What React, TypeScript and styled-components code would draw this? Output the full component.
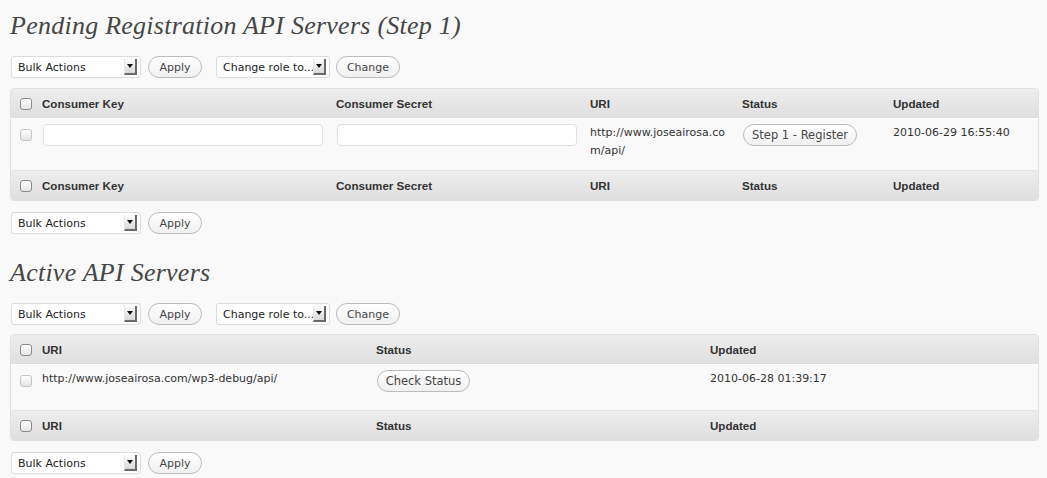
import React from "react";
import styled, { createGlobalStyle } from "styled-components";

const GlobalStyle = createGlobalStyle`
  html, body { margin: 0; padding: 0; background: #f9f9f9; }
  body { font-family: "DejaVu Sans", sans-serif; color: #333; }
  * { box-sizing: border-box; }
`;

const Page = styled.div`
  padding: 0 8px 0 10px;
  width: 1047px;
`;

const Title = styled.h2<{ $top: number }>`
  margin: ${(p) => p.$top}px 0 0;
  font-family: "Liberation Serif", serif;
  font-style: italic;
  font-weight: normal;
  font-size: 26px;
  letter-spacing: 0.25px;
  line-height: 30px;
  color: #464646;
`;

const Toolbar = styled.div<{ $top: number }>`
  display: flex;
  align-items: center;
  height: 22px;
  margin-top: ${(p) => p.$top}px;
`;

const SelectBox = styled.div<{ $w: number; $gap: number }>`
  position: relative;
  width: ${(p) => p.$w}px;
  height: 22px;
  margin-left: ${(p) => p.$gap}px;
  background: #fff;
  border: 1px solid #dcdcdc;
  border-radius: 3px;
  display: flex;
  align-items: center;
  padding-left: 6px;
  font-size: 11px;
  color: #222;
  white-space: nowrap;
  overflow: hidden;
`;

const Arrow = styled.span`
  position: absolute;
  right: 3px;
  top: 2px;
  width: 13px;
  height: 16px;
  background: linear-gradient(#fdfdfd, #d8d8d8);
  border-left: 1px solid #e6e6e6;
  border-right: 2px solid #6a6a6a;
  border-bottom: 2px solid #6a6a6a;
  display: flex;
  align-items: center;
  justify-content: center;
  &::after {
    content: "";
    border-left: 3px solid transparent;
    border-right: 3px solid transparent;
    border-top: 4px solid #111;
  }
`;

const Button = styled.button<{ $w: number; $gap: number }>`
  width: ${(p) => p.$w}px;
  height: 22px;
  margin-left: ${(p) => p.$gap}px;
  padding: 0;
  border: 1px solid #bbb;
  border-radius: 11px;
  background: linear-gradient(#ffffff, #f0f0f0);
  font-family: "DejaVu Sans", sans-serif;
  font-size: 11px;
  color: #464646;
  display: flex;
  align-items: center;
  justify-content: center;
  cursor: pointer;
`;

const Table = styled.div<{ $cols: string; $top: number }>`
  margin-top: ${(p) => p.$top}px;
  border: 1px solid #dfdfdf;
  border-radius: 4px;
  overflow: hidden;
  display: grid;
  grid-template-columns: ${(p) => p.$cols};
`;

const HeadCell = styled.div<{ $foot?: boolean }>`
  height: ${(p) => (p.$foot ? 30 : 29)}px;
  background: linear-gradient(#ededed, #dfdfdf);
  border-top: ${(p) => (p.$foot ? "1px solid #e6e6e6" : "none")};
  display: flex;
  align-items: center;
  padding: 0 7px;
  font-family: "Liberation Sans", sans-serif;
  font-weight: bold;
  font-size: 11.6px;
  color: #333;
`;

const CheckHead = styled(HeadCell)`
  padding: 0 0 0 9px;
`;

const Cell = styled.div<{ $h: number }>`
  height: ${(p) => p.$h}px;
  background: #f9f9f9;
  border-top: 1px solid #fff;
  padding: 5px 7px 0;
  font-size: 11px;
  line-height: 18px;
  color: #333;
  word-break: break-all;
`;

const CheckCell = styled(Cell)`
  padding: 10px 0 0 9px;
`;

const Checkbox = styled.span<{ $light?: boolean }>`
  display: block;
  width: 12px;
  height: 12px;
  border: 1px solid ${(p) => (p.$light ? "#c4c4c4" : "#8a8a8a")};
  border-radius: 3px;
  background: linear-gradient(#ffffff, #e4e4e4);
`;

const TextInput = styled.input`
  display: block;
  width: 100%;
  height: 22px;
  margin: 0 0 0 1px;
  border: 1px solid #dfdfdf;
  border-radius: 4px;
  background: #fff;
`;

const RowButton = styled(Button)`
  margin-top: 0;
  font-size: 11.5px;
`;

const Select = ({ label, w, gap }: { label: string; w: number; gap: number }) => (
  <SelectBox $w={w} $gap={gap}>
    {label}
    <Arrow />
  </SelectBox>
);

const BulkBar = ({ top, role }: { top: number; role?: boolean }) => (
  <Toolbar $top={top}>
    <Select label="Bulk Actions" w={130} gap={1} />
    <Button $w={54} $gap={7}>Apply</Button>
    {role && (
      <>
        <Select label="Change role to..." w={114} gap={14} />
        <Button $w={64} $gap={6}>Change</Button>
      </>
    )}
  </Toolbar>
);

const Header = ({ cols, foot }: { cols: string[]; foot?: boolean }) => (
  <>
    <CheckHead $foot={foot}>
      <Checkbox />
    </CheckHead>
    {cols.map((c) => (
      <HeadCell key={c} $foot={foot}>
        {c}
      </HeadCell>
    ))}
  </>
);

const pendingCols = ["Consumer Key", "Consumer Secret", "URI", "Status", "Updated"];
const activeCols = ["URI", "Status", "Updated"];

export default function App() {
  return (
    <Page>
      <GlobalStyle />
      <Title $top={11}>Pending Registration API Servers (Step 1)</Title>
      <BulkBar top={15} role />
      <Table $cols="24px 294px 254px 152px 151px 1fr" $top={10}>
        <Header cols={pendingCols} />
        <CheckCell $h={52}>
          <Checkbox $light />
        </CheckCell>
        <Cell $h={52}>
          <TextInput />
        </Cell>
        <Cell $h={52}>
          <TextInput />
        </Cell>
        <Cell $h={52}>http://www.joseairosa.com/api/</Cell>
        <Cell $h={52}>
          <RowButton $w={114} $gap={1}>Step 1 - Register</RowButton>
        </Cell>
        <Cell $h={52}>2010-06-29 16:55:40</Cell>
        <Header cols={pendingCols} foot />
      </Table>
      <BulkBar top={11} />
      <Title $top={24}>Active API Servers</Title>
      <BulkBar top={15} role />
      <Table $cols="24px 334px 334px 1fr" $top={9}>
        <Header cols={activeCols} />
        <CheckCell $h={46}>
          <Checkbox $light />
        </CheckCell>
        <Cell $h={46}>http://www.joseairosa.com/wp3-debug/api/</Cell>
        <Cell $h={46}>
          <RowButton $w={93} $gap={1}>Check Status</RowButton>
        </Cell>
        <Cell $h={46}>2010-06-28 01:39:17</Cell>
        <Header cols={activeCols} foot />
      </Table>
      <BulkBar top={11} />
    </Page>
  );
}
